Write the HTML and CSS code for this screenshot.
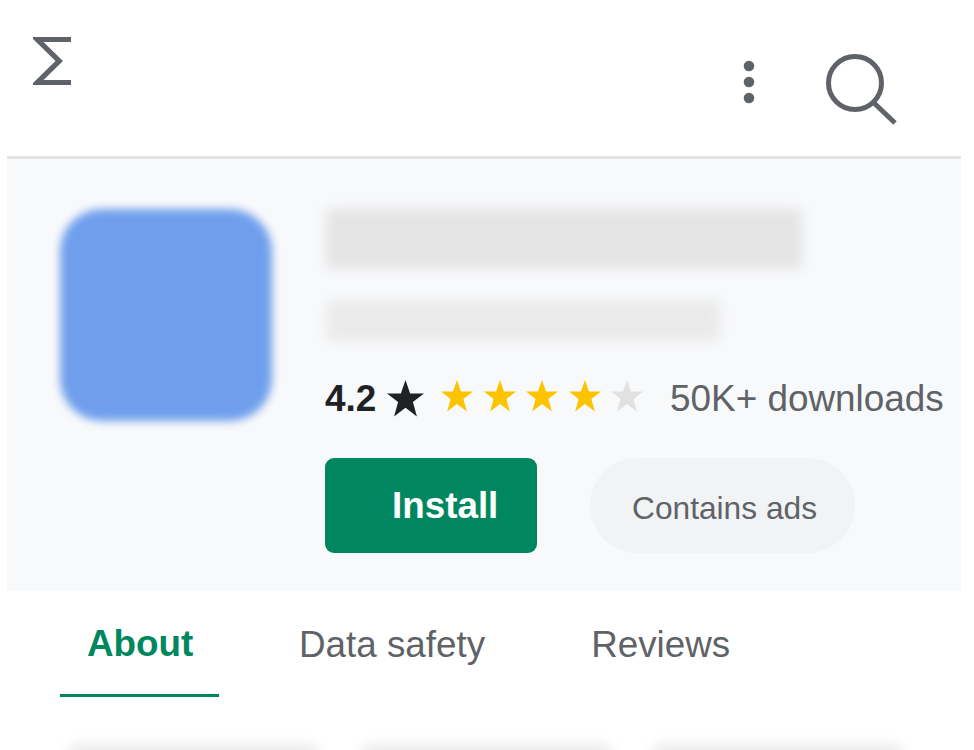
FILE: index.html
```html
<!DOCTYPE html>
<html lang="en">
<head>
  <meta charset="UTF-8" />
  <title>App listing</title>
  <link rel="stylesheet" href="styles.css">
</head>
<body>
  <header class="topbar">
    <svg class="logo" width="38" height="48" viewBox="33 37 38 48"><path d="M33 37H71V42H43.5L63 61L43.5 80H71V85H33V83L55.5 61L33 39Z"/></svg>
    <div class="actions">
      <svg class="more" width="12" height="44" viewBox="0 0 12 44"><circle cx="6" cy="6" r="5.3"/><circle cx="6" cy="22" r="5.3"/><circle cx="6" cy="38" r="5.3"/></svg>
      <svg class="search" width="72" height="72" viewBox="0 0 72 72"><circle cx="30" cy="30" r="26.5"/><path d="M48 49L70 70"/></svg>
    </div>
  </header>

  <section class="hero">
    <div class="app-icon"></div>
    <div class="info">
      <div class="blur-title"></div>
      <div class="blur-sub"></div>
      <div class="rating">
        <span class="score">4.2</span>
        <svg class="star star-dark" width="37" height="37" viewBox="0 0 24 24"><path d="M12 0L15 8.7H24L16.8 14.2L19.4 23.6L12 18L4.6 23.6L7.2 14.2L0 8.7H9Z"/></svg>
        <div class="stars">
          <svg class="star star-on" width="32" height="32" viewBox="0 0 24 24"><path d="M12 0L15 8.7H24L16.8 14.2L19.4 23.6L12 18L4.6 23.6L7.2 14.2L0 8.7H9Z"/></svg>
          <svg class="star star-on" width="32" height="32" viewBox="0 0 24 24"><path d="M12 0L15 8.7H24L16.8 14.2L19.4 23.6L12 18L4.6 23.6L7.2 14.2L0 8.7H9Z"/></svg>
          <svg class="star star-on" width="32" height="32" viewBox="0 0 24 24"><path d="M12 0L15 8.7H24L16.8 14.2L19.4 23.6L12 18L4.6 23.6L7.2 14.2L0 8.7H9Z"/></svg>
          <svg class="star star-on" width="32" height="32" viewBox="0 0 24 24"><path d="M12 0L15 8.7H24L16.8 14.2L19.4 23.6L12 18L4.6 23.6L7.2 14.2L0 8.7H9Z"/></svg>
          <svg class="star star-off" width="32" height="32" viewBox="0 0 24 24"><path d="M12 0L15 8.7H24L16.8 14.2L19.4 23.6L12 18L4.6 23.6L7.2 14.2L0 8.7H9Z"/></svg>
        </div>
        <span class="downloads">50K+ downloads</span>
      </div>
      <div class="cta">
        <button class="install">Install</button>
        <span class="ads">Contains ads</span>
      </div>
    </div>
  </section>

  <nav class="tabs">
    <a class="tab tab-active">About</a>
    <a class="tab tab-data">Data safety</a>
    <a class="tab tab-reviews">Reviews</a>
  </nav>

  <div class="chips">
    <div class="chip"></div>
    <div class="chip"></div>
    <div class="chip"></div>
  </div>
</body>
</html>
```

FILE: styles.css
```css
* { box-sizing: border-box; margin: 0; padding: 0; }
html, body { height: 100%; overflow: hidden; }
body {
  font-family: 'Liberation Sans', Arial, sans-serif;
  background: #ffffff;
  color: #5f6368;
  padding: 0 13px 0 7px;
}

.topbar {
  height: 159px;
  border-bottom: 3px solid #e2e3e3;
  display: flex;
  justify-content: space-between;
  align-items: flex-start;
  padding: 37px 64px 0 26px;
}
.logo { fill: #5f6368; display: block; }
.actions {
  display: flex;
  align-items: flex-start;
  gap: 70px;
  padding-top: 16px;
}
.more { fill: #5f6368; display: block; margin-top: 7px; }
.search {
  fill: none;
  stroke: #5f6368;
  stroke-width: 5px;
  display: block;
}

.hero {
  background: #f8f9fb;
  height: 432px;
  display: flex;
  gap: 53px;
  padding: 50px 0 0 53px;
}
.app-icon {
  width: 212px;
  height: 212px;
  flex: none;
  background: #6f9fec;
  border-radius: 42px;
  filter: blur(4px);
}
.info { flex: 1; }
.blur-title {
  width: 476px;
  height: 60px;
  margin-left: 1px;
  background: #e4e4e4;
  border-radius: 6px;
  filter: blur(6px);
}
.blur-sub {
  width: 393px;
  height: 40px;
  margin: 32px 0 0 2px;
  background: #e9eae9;
  border-radius: 6px;
  filter: blur(6px);
}

.rating {
  display: flex;
  align-items: center;
  height: 44px;
  margin-top: 35px;
  font-size: 36.9px;
}
.score { font-weight: 700; color: #202124; width: 62px; padding-top: 1px; }
.star { display: block; }
.star-dark { fill: #202124; }
.star-on { fill: #fcc400; }
.star-off { fill: #e1e1e1; }
.stars {
  display: flex;
  gap: 10.5px;
  margin: -5px 0 0 17px;
}
.downloads { margin-left: 27px; padding-top: 2px; }

.cta {
  display: flex;
  gap: 53px;
  margin-top: 38px;
}
.install {
  width: 212px;
  height: 95px;
  border: none;
  border-radius: 9px;
  background: #01875f;
  color: #ffffff;
  font-family: inherit;
  font-size: 36.8px;
  font-weight: 700;
  text-align: left;
  padding-left: 67px;
}
.ads {
  width: 265px;
  height: 95px;
  border-radius: 48px;
  background: #f2f3f5;
  font-size: 31.7px;
  display: flex;
  align-items: center;
  justify-content: center;
  padding: 5px 0 0 4px;
}

.tabs {
  display: flex;
  margin-left: 53px;
  font-size: 36.8px;
  height: 106px;
}
.tab {
  display: flex;
  align-items: center;
  height: 106px;
  padding: 2px 25px 0 28px;
  margin-right: 55px;
}
.tab-active {
  font-weight: 700;
  color: #01875f;
  width: 159px;
  padding-left: 27px;
  border-bottom: 3px solid #01875f;
}
.tab-data { margin-right: 23px; padding-left: 25px; }
.tab-reviews { padding-left: 58px; }

.chips {
  display: flex;
  gap: 42px;
  margin: 47px 0 0 62px;
}
.chip {
  width: 250px;
  height: 40px;
  background: #ececec;
  border-radius: 8px;
  filter: blur(6px);
}
```
